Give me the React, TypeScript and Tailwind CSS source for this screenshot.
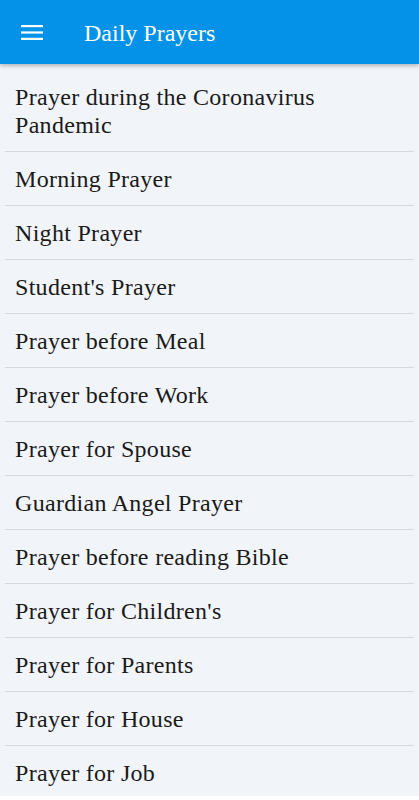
import React from "react";

const items = [
  "Prayer during the Coronavirus Pandemic",
  "Morning Prayer",
  "Night Prayer",
  "Student's Prayer",
  "Prayer before Meal",
  "Prayer before Work",
  "Prayer for Spouse",
  "Guardian Angel Prayer",
  "Prayer before reading Bible",
  "Prayer for Children's",
  "Prayer for Parents",
  "Prayer for House",
  "Prayer for Job",
];

export default function App() {
  return (
    <div className="w-[419px] h-[800px] bg-white" style={{ fontFamily: '"Liberation Serif", serif' }}>
      <div className="h-[796px] bg-[#f1f4f8] overflow-hidden flex flex-col">
        <header className="relative z-10 h-[64px] shrink-0 bg-[#0392e8] flex items-center shadow-[0_2px_4px_rgba(0,0,0,0.25)]">
          <div className="w-[84px] flex justify-start pl-[21px]">
            <svg width="22" height="16" viewBox="0 0 22 16" className="block">
              <rect x="0" y="1" width="22" height="2.2" fill="#ffffff" />
              <rect x="0" y="7.4" width="22" height="2.2" fill="#ffffff" />
              <rect x="0" y="13.8" width="22" height="2.2" fill="#ffffff" />
            </svg>
          </div>
          <h1 className="text-white text-[24px] leading-none mt-[1px]">Daily Prayers</h1>
        </header>
        <ul className="pt-[6px] mx-[5px]">
          {items.map((t, i) => (
            <li
              key={i}
              className={
                "pl-[10px] pr-[22px] pt-[13px] pb-[12px] text-[24px] leading-[28px] tracking-[0.3px] text-[#1a1a1a] " +
                (i < items.length - 1 ? "border-b border-[#d6dade]" : "")
              }
            >
              {t}
            </li>
          ))}
        </ul>
      </div>
    </div>
  );
}
